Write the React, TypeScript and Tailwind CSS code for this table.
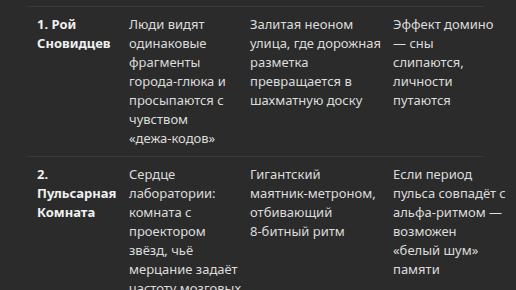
const rows: { name: string[]; cells: string[][] }[] = [
  {
    name: ["1. Рой", "Сновидцев"],
    cells: [
      ["Люди видят", "одинаковые", "фрагменты", "города-глюка и", "просыпаются с", "чувством", "«дежа-кодов»"],
      ["Залитая неоном", "улица, где дорожная", "разметка", "превращается в", "шахматную доску"],
      ["Эффект домино", "— сны", "слипаются,", "личности", "путаются"],
    ],
  },
  {
    name: ["2.", "Пульсарная", "Комната"],
    cells: [
      ["Сердце", "лаборатории:", "комната с", "проектором", "звёзд, чьё", "мерцание задаёт", "частоту мозговых", "волн"],
      ["Гигантский", "маятник-метроном,", "отбивающий", "8-битный ритм"],
      ["Если период", "пульса совпадёт с", "альфа-ритмом —", "возможен", "«белый шум»", "памяти"],
    ],
  },
];

const header = ["Зона", "Образ и подсказки", "Обстановка", "Опасность"];

function Lines({ lines }: { lines: string[] }) {
  return (
    <>
      {lines.map((l, i) => (
        <div key={i} className="whitespace-nowrap">
          {l}
        </div>
      ))}
    </>
  );
}

export default function App() {
  return (
    <div
      className="h-[290px] w-full overflow-hidden bg-[#2b2b2b] text-[13px] leading-[19px] text-[#dcdcdc]"
      style={{ fontFamily: '"Noto Sans", "Open Sans", sans-serif' }}
    >
      <div className="-mt-[27px] ml-[27px] w-[457px]">
        {/* header row, mostly scrolled out of view */}
        <div className="grid grid-cols-[92px_121px_143px_101px] border-b border-[#393939] pt-2 pb-[6px] font-bold text-[#ececec]">
          {header.map((h) => (
            <div key={h} className="whitespace-nowrap pl-[10px]">
              {h}
            </div>
          ))}
        </div>

        {rows.map((r, i) => (
          <div
            key={i}
            className="grid grid-cols-[92px_121px_143px_101px] border-b border-[#393939] py-2"
          >
            <div className="pl-[10px] font-bold text-[#f0f0f0]">
              <Lines lines={r.name} />
            </div>
            {r.cells.map((c, j) => (
              <div key={j} className="pl-[10px]">
                <Lines lines={c} />
              </div>
            ))}
          </div>
        ))}
      </div>
    </div>
  );
}
